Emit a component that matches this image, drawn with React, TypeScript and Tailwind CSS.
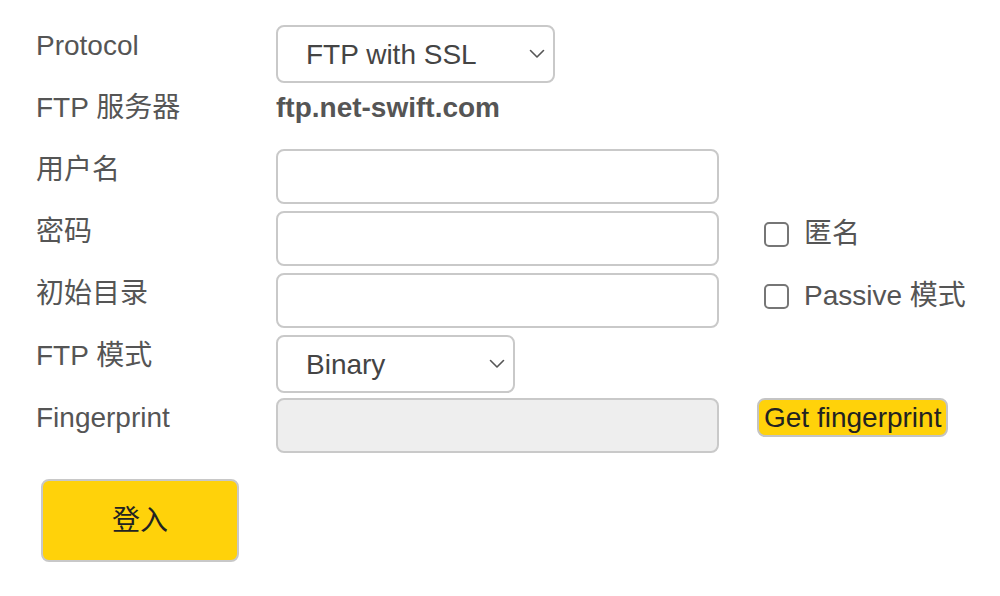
import React, { useState } from 'react';

const font = "font-['Liberation_Sans','Noto_Sans_CJK_SC',sans-serif]";

const Chevron: React.FC = () => (
  <svg
    className="pointer-events-none absolute right-[10px] top-1/2 -translate-y-1/2"
    width="16"
    height="10"
    viewBox="0 0 16 10"
    fill="none"
  >
    <path d="M1.5 1.5 L8 8 L14.5 1.5" stroke="#555" strokeWidth="1.6" strokeLinecap="round" strokeLinejoin="round" />
  </svg>
);

const Label: React.FC<{ children: React.ReactNode }> = ({ children }) => (
  <div className="w-[240px] shrink-0 pt-[5px] text-[28px] leading-[32px] text-[#555]">{children}</div>
);

const Row: React.FC<{ children: React.ReactNode }> = ({ children }) => (
  <div className="flex h-[62px] items-start">{children}</div>
);

const TextInput: React.FC<{ disabled?: boolean; type?: string }> = ({ disabled, type = 'text' }) => (
  <input
    type={type}
    disabled={disabled}
    className={
      'h-[55px] w-[443px] shrink-0 rounded-[8px] border-2 border-[#c9c9c9] px-3 text-[28px] text-[#444] outline-none ' +
      (disabled ? 'bg-[#eeeeee]' : 'bg-white')
    }
  />
);

const Check: React.FC<{ label: string; checked: boolean; onChange: () => void }> = ({ label, checked, onChange }) => (
  <label className="ml-[45px] mt-[7px] flex cursor-pointer items-center gap-[15px] text-[28px] leading-[32px] text-[#555]">
    <input
      type="checkbox"
      checked={checked}
      onChange={onChange}
      className="h-[25px] w-[25px] appearance-none rounded-[5px] border-2 border-[#767676] bg-white checked:bg-[#555]"
    />
    <span>{label}</span>
  </label>
);

export default function App() {
  const [protocol, setProtocol] = useState('ftps');
  const [mode, setMode] = useState('binary');
  const [anon, setAnon] = useState(false);
  const [passive, setPassive] = useState(false);

  return (
    <div className={`min-h-screen bg-white pl-[36px] pt-[25px] ${font}`}>
      <Row>
        <Label>Protocol</Label>
        <div className="relative">
          <select
            value={protocol}
            onChange={(e) => setProtocol(e.target.value)}
            className="h-[58px] w-[279px] appearance-none rounded-[8px] border-2 border-[#c9c9c9] bg-white pl-[28px] pt-[2px] text-[28px] text-[#444] outline-none"
          >
            <option value="ftp">FTP</option>
            <option value="ftps">FTP with SSL</option>
            <option value="sftp">SFTP</option>
          </select>
          <Chevron />
        </div>
      </Row>
      <Row>
        <Label>FTP 服务器</Label>
        <div className="pt-[5px] text-[28px] font-bold leading-[32px] text-[#555]">ftp.net-swift.com</div>
      </Row>
      <Row>
        <Label>用户名</Label>
        <TextInput />
      </Row>
      <Row>
        <Label>密码</Label>
        <TextInput type="password" />
        <Check label="匿名" checked={anon} onChange={() => setAnon(!anon)} />
      </Row>
      <Row>
        <Label>初始目录</Label>
        <TextInput />
        <Check label="Passive 模式" checked={passive} onChange={() => setPassive(!passive)} />
      </Row>
      <Row>
        <Label>FTP 模式</Label>
        <div className="relative">
          <select
            value={mode}
            onChange={(e) => setMode(e.target.value)}
            className="h-[58px] w-[239px] appearance-none rounded-[8px] border-2 border-[#c9c9c9] bg-white pl-[28px] pt-[2px] text-[28px] text-[#444] outline-none"
          >
            <option value="binary">Binary</option>
            <option value="ascii">ASCII</option>
          </select>
          <Chevron />
        </div>
      </Row>
      <Row>
        <Label>Fingerprint</Label>
        <div className="pt-[1px]">
          <TextInput disabled />
        </div>
        <button className="ml-[38px] mt-[1px] h-[39px] rounded-[8px] border-2 border-[#c4c4c4] bg-[#ffd20a] px-[5px] text-[28px] leading-[32px] text-[#222]">
          Get fingerprint
        </button>
      </Row>
      <div className="pl-[5px] pt-[20px]">
        <button className="h-[83px] w-[198px] rounded-[8px] border-2 border-[#c8c8c8] bg-[#ffd20a] text-[28px] text-[#222]">
          登入
        </button>
      </div>
    </div>
  );
}
